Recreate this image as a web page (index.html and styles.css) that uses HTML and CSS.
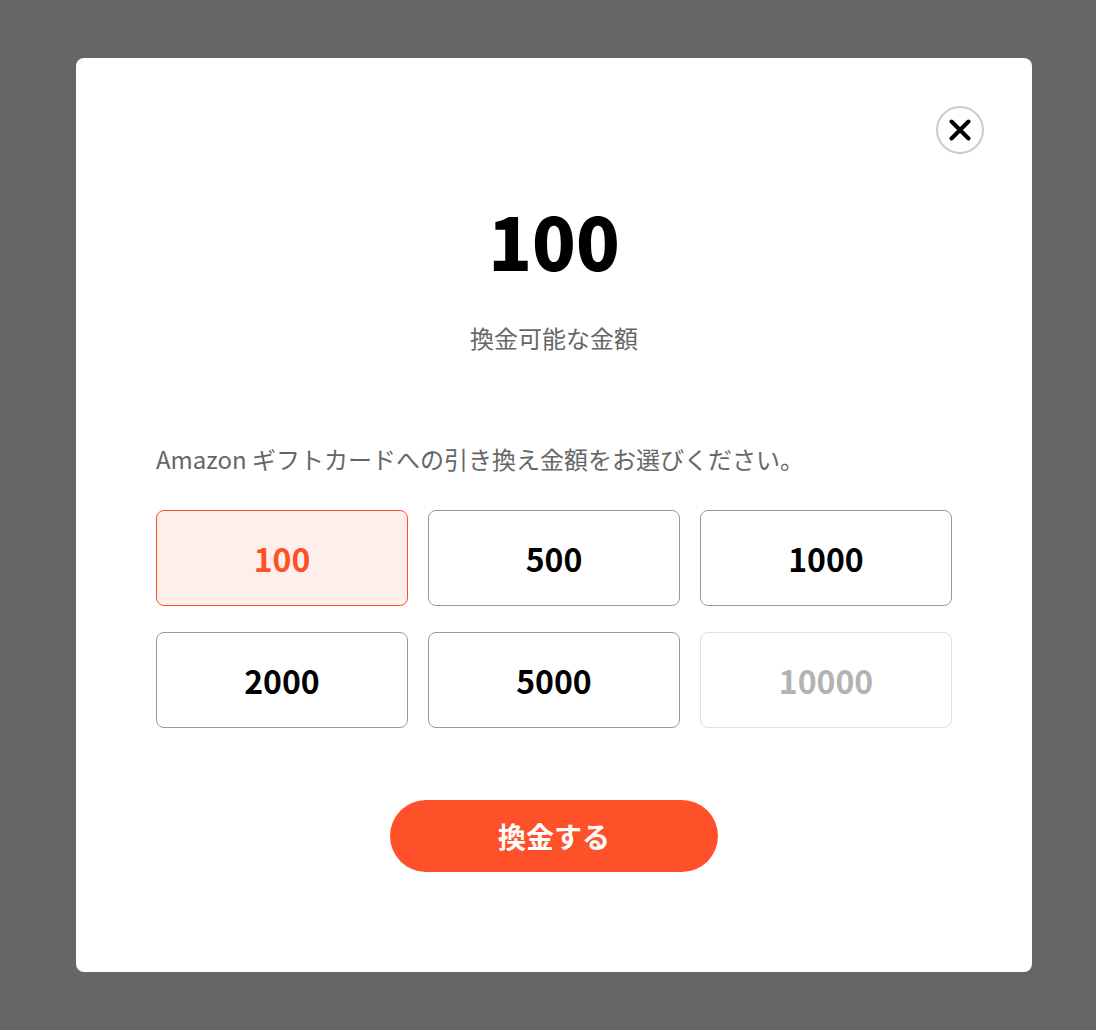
FILE: index.html
```html
<!DOCTYPE html>
<html lang="ja">
<head>
    <meta charset="UTF-8">
    <meta name="viewport" content="width=device-width, initial-scale=1.0">
    <title>換金</title>
    <link rel="stylesheet" href="styles.css">
</head>
<body>
    <div class="modal">
        <div class="modal-head">
            <button class="close" aria-label="閉じる">
                <svg width="22" height="22" viewBox="0 0 22 22">
                    <path d="M2.5 2.5 L19.5 19.5 M19.5 2.5 L2.5 19.5" stroke="#000" stroke-width="4" stroke-linecap="round" fill="none"/>
                </svg>
            </button>
        </div>

        <div class="amount">100</div>
        <p class="amount-label">換金可能な金額</p>

        <p class="lead">Amazon ギフトカードへの引き換え金額をお選びください。</p>

        <!-- amount options -->
        <div class="options">
            <button class="option selected">100</button>
            <button class="option">500</button>
            <button class="option">1000</button>
            <button class="option">2000</button>
            <button class="option">5000</button>
            <button class="option disabled" disabled>10000</button>
        </div>

        <div class="actions">
            <button class="submit">換金する</button>
        </div>
    </div>
</body>
</html>
```

FILE: styles.css
```css
body {
    margin: 0;
    padding: 58px 0 0;
    min-height: 100vh;
    box-sizing: border-box;
    background-color: #666666;
    font-family: "Noto Sans CJK JP", "Noto Sans", sans-serif;
}

/* Modal */
.modal {
    width: 956px;
    height: 914px;
    box-sizing: border-box;
    margin-left: 76px;
    padding: 48px 80px 0;
    background-color: #ffffff;
    border-radius: 8px;
}

.modal-head {
    display: flex;
    justify-content: flex-end;
    margin-right: -32px;
}

.close {
    width: 48px;
    height: 48px;
    padding: 0;
    border: 2px solid #cccccc;
    border-radius: 50%;
    background-color: #ffffff;
    display: flex;
    align-items: center;
    justify-content: center;
    cursor: pointer;
}

.amount {
    margin-top: 50px;
    font-size: 72px;
    line-height: 72px;
    font-weight: 900;
    text-align: center;
    color: #000000;
}

.amount-label {
    margin: 44px 0 0;
    font-size: 24px;
    line-height: 36px;
    text-align: center;
    color: #666666;
}

.lead {
    margin: 85px 0 0;
    font-size: 24px;
    line-height: 36px;
    color: #666666;
}

/* Options grid */
.options {
    margin-top: 33px;
    display: grid;
    grid-template-columns: repeat(3, 1fr);
    column-gap: 20px;
    row-gap: 26px;
}

.option {
    height: 96px;
    border: 1px solid #999999;
    border-radius: 8px;
    background-color: #ffffff;
    font-family: inherit;
    font-size: 32px;
    font-weight: bold;
    color: #000000;
    cursor: pointer;
}

.option.selected {
    background-color: #ffeeea;
    border-color: #ff5129;
    color: #ff5129;
}

.option.disabled {
    border-color: #e0e0e0;
    color: #b3b3b3;
    cursor: default;
}

.actions {
    margin-top: 72px;
    display: flex;
    justify-content: center;
}

.submit {
    width: 328px;
    height: 72px;
    border: none;
    border-radius: 36px;
    background-color: #ff5129;
    font-family: inherit;
    font-size: 28px;
    font-weight: bold;
    color: #ffffff;
    cursor: pointer;
}
```
